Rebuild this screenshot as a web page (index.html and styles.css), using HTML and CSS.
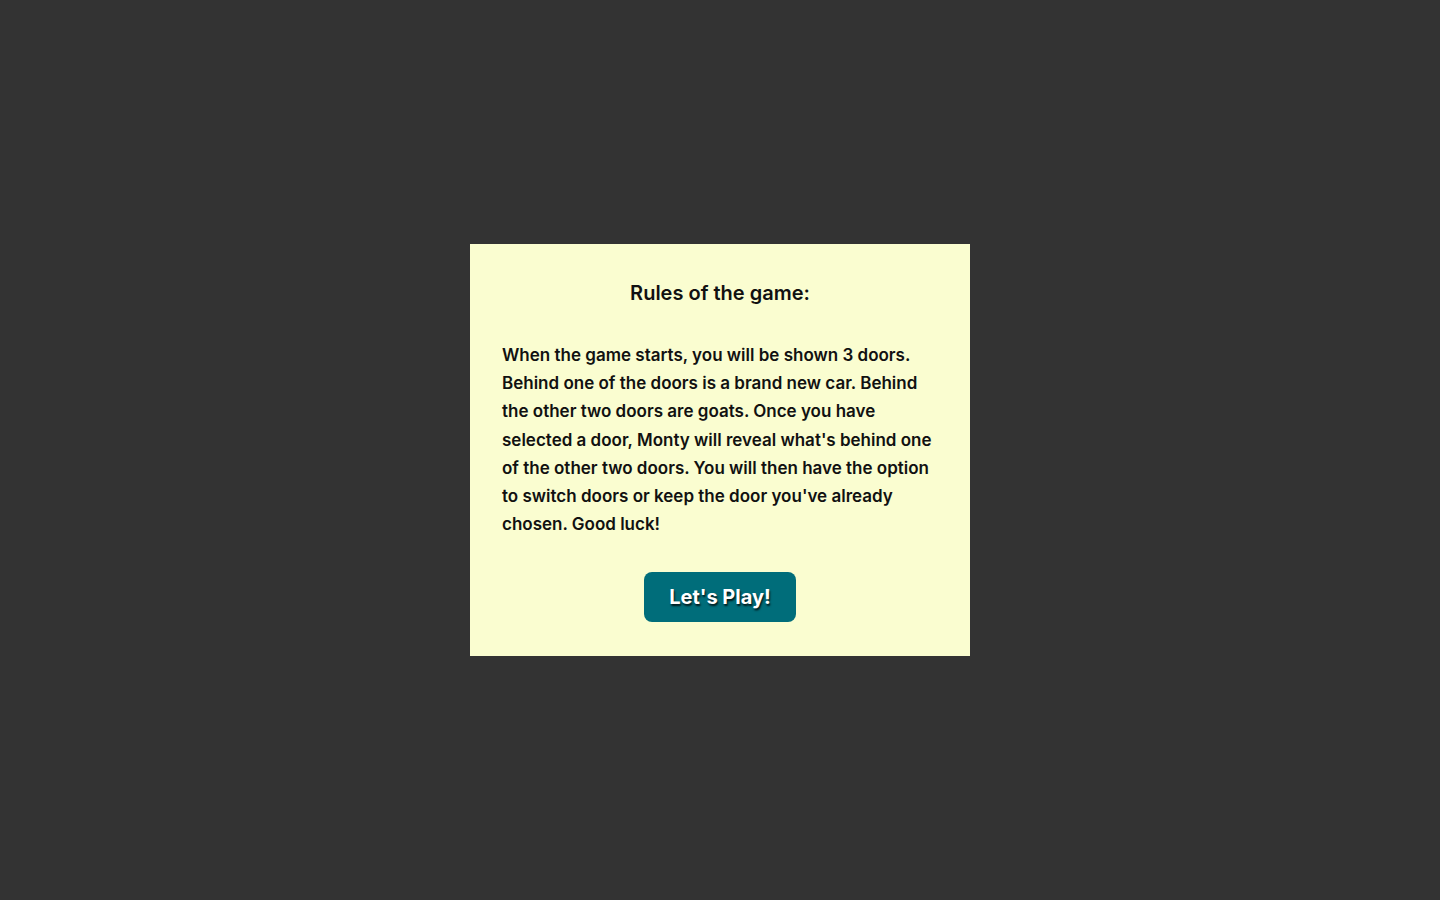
FILE: index.html
```html
<!DOCTYPE html>
<html lang="en">
<head>
<meta charset="utf-8">
<title>Monty Hall</title>
<link rel="stylesheet" href="styles.css">
</head>
<body>
<div class="overlay">
  <div class="modal">
    <h2 class="modal-title">Rules of the game:</h2>
    <p class="modal-text">When the game starts, you will be shown 3 doors. Behind one of the doors is a brand new car. Behind the other two doors are goats. Once you have selected a door, Monty will reveal what's behind one of the other two doors. You will then have the option to switch doors or keep the door you've already chosen. Good luck!</p>
    <div class="actions">
      <button class="play-btn">Let's Play!</button>
    </div>
  </div>
</div>
</body>
</html>
```
FILE: styles.css
```css
* { box-sizing: border-box; }
html, body { margin: 0; padding: 0; }
body {
  background: #333333;
  font-family: Inter, "Noto Sans", sans-serif;
  color: #111;
}
.overlay {
  width: 1440px;
  height: 900px;
  display: flex;
  align-items: center;
  justify-content: center;
}
.modal {
  width: 500px;
  height: 412px;
  background: #fafdd0;
  padding: 32px 32px 34px;
}
.modal-title {
  margin: 0;
  font-size: 20px;
  line-height: 34px;
  font-weight: 600;
  text-align: center;
}
.modal-text {
  margin: 31px 0 0;
  font-size: 17px;
  line-height: 28.17px;
  font-weight: 600;
}
.actions {
  display: flex;
  justify-content: center;
  margin-top: 34px;
}
.play-btn {
  width: 152px;
  height: 50px;
  border: none;
  border-radius: 8px;
  background: #006d7a;
  color: #fff;
  font-family: Inter, "Noto Sans", sans-serif;
  font-size: 20px;
  font-weight: 700;
  text-shadow: 1px 2px 2px rgba(0,0,0,0.8);
  cursor: pointer;
}
```
